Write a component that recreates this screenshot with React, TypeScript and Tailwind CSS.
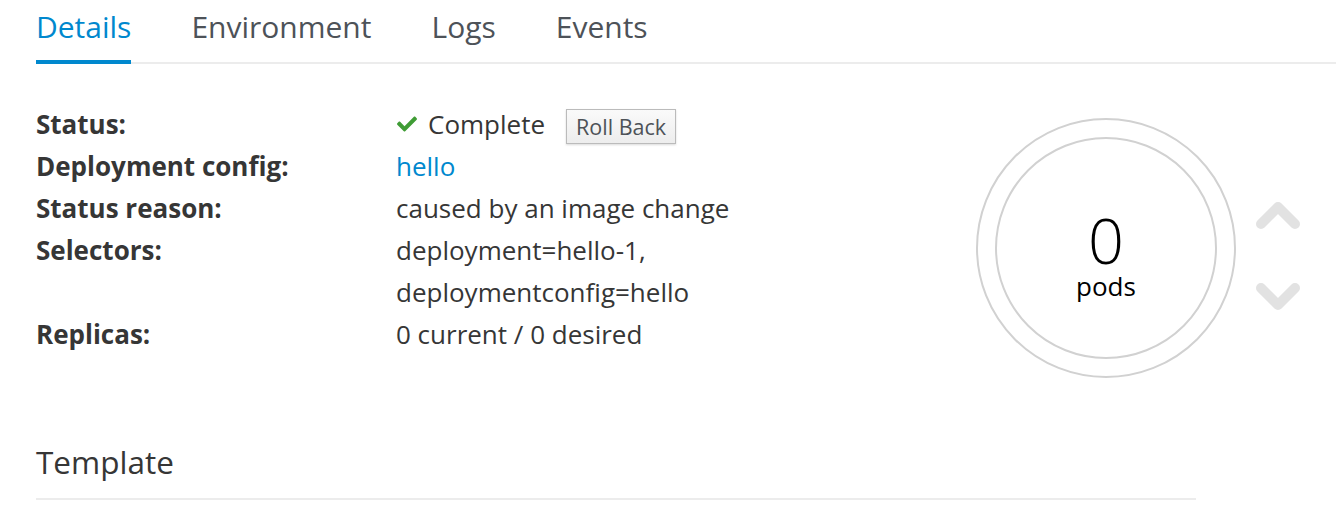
import React from "react";

const TABS = ["Details", "Environment", "Logs", "Events"];

const ROWS: { label: string; value: React.ReactNode }[] = [
  {
    label: "Status:",
    value: (
      <span className="flex items-center">
        <svg viewBox="0 0 512 512" className="mr-[10px] h-[20px] w-[22px] fill-[#3f9c35]">
          <path d="M173.9 439.4 7.5 273c-10-10-10-26.2 0-36.2l36.2-36.2c10-10 26.2-10 36.2 0L192 312.7 432.1 72.6c10-10 26.2-10 36.2 0l36.2 36.2c10 10 10 26.2 0 36.2L210.1 439.4c-10 10-26.2 10-36.2 0z" />
        </svg>
        Complete
        <button className="mt-[4px] ml-[21px] h-[35px] border border-[#bbbbbb] bg-gradient-to-b from-[#fafafa] to-[#ededed] px-[9px] text-[21.5px] leading-[31px] text-[#4d5258] shadow-[0_1px_2px_rgba(0,0,0,0.15)]">
          Roll Back
        </button>
      </span>
    ),
  },
  { label: "Deployment config:", value: <span className="text-[#0088ce]">hello</span> },
  { label: "Status reason:", value: "caused by an image change" },
  {
    label: "Selectors:",
    value: (
      <span>
        deployment=hello-1,
        <br />
        deploymentconfig=hello
      </span>
    ),
  },
  { label: "Replicas:", value: "0 current / 0 desired" },
];

export default function App() {
  return (
    <div className="h-[530px] w-[1336px] overflow-hidden bg-white font-['Open_Sans',sans-serif] text-[#363636]">
      <div className="ml-[36px] flex border-b-2 border-[#ececec]">
        {TABS.map((t, i) => (
          <div
            key={t}
            className={
              i === 0
                ? "-mb-[2px] border-b-4 border-[#0088ce] pt-[5px] pb-[11px] text-[30px] leading-[44px] text-[#0088ce]"
                : "ml-[60px] pt-[5px] pb-[13px] text-[30px] leading-[44px] text-[#4d5258]"
            }
          >
            {t}
          </div>
        ))}
      </div>

      <div className="flex px-[36px]">
        <dl className="mt-[39px] flex-1 text-[26px] leading-[42px]">
          {ROWS.map((r) => (
            <div key={r.label} className="flex">
              <dt className="w-[360px] font-bold">{r.label}</dt>
              <dd>{r.value}</dd>
            </div>
          ))}
        </dl>

        <div className="mt-[54px] flex items-center">
          <div className="flex h-[260px] w-[260px] items-center justify-center rounded-full border-2 border-[#d1d1d1]">
            <div className="flex h-[222px] w-[222px] flex-col items-center justify-center rounded-full border-2 border-[#d1d1d1] pt-[14px] text-black">
              <span className="text-[63px] font-light leading-[62px]">0</span>
              <span className="text-[26px] leading-[30px]">pods</span>
            </div>
          </div>
          <div className="mt-[16px] ml-[20px] flex flex-col gap-[52px]">
            <svg viewBox="0 0 44 30" className="h-[30px] w-[44px]">
              <path d="M5 24 22 7 39 24" fill="none" stroke="#e2e2e2" strokeWidth="10" strokeLinejoin="round" strokeLinecap="round" />
            </svg>
            <svg viewBox="0 0 44 30" className="h-[30px] w-[44px]">
              <path d="M5 6 22 23 39 6" fill="none" stroke="#e2e2e2" strokeWidth="10" strokeLinejoin="round" strokeLinecap="round" />
            </svg>
          </div>
        </div>
      </div>

      <div className="mx-[36px] mt-[64px] w-[1160px] border-b-2 border-[#ececec] pb-[16px]">
        <h2 className="text-[31.5px] leading-[40px] text-[#363636]">Template</h2>
      </div>
    </div>
  );
}
